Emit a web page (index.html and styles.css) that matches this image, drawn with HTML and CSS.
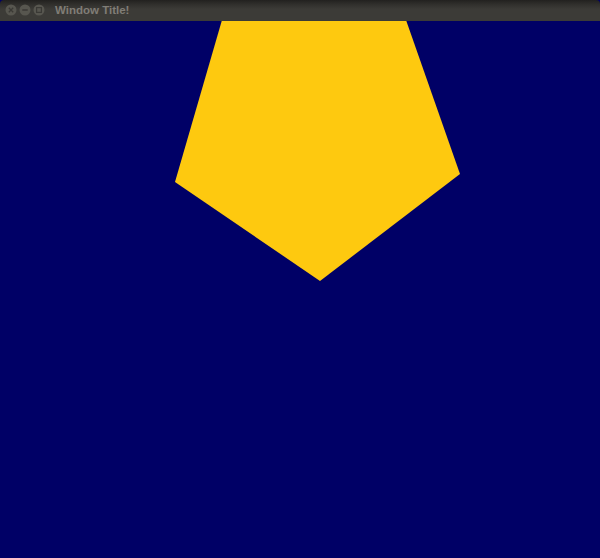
FILE: index.html
```html
<!DOCTYPE html>
<html>
<head>
<meta charset="utf-8">
<link rel="stylesheet" href="styles.css">
</head>
<body>
<div class="window">
  <div class="titlebar">
    <div class="buttons">
      <svg class="btn" width="12" height="12" viewBox="0 0 12 12"><circle cx="6" cy="6" r="5.5" fill="#57564f"/><path d="M3.8 3.8 L8.2 8.2 M8.2 3.8 L3.8 8.2" stroke="#3a3935" stroke-width="1.3"/></svg>
      <svg class="btn" width="12" height="12" viewBox="0 0 12 12"><circle cx="6" cy="6" r="5.5" fill="#57564f"/><path d="M3.3 6 L8.7 6" stroke="#3a3935" stroke-width="1.5"/></svg>
      <svg class="btn" width="12" height="12" viewBox="0 0 12 12"><circle cx="6" cy="6" r="5.5" fill="#57564f"/><rect x="3.6" y="3.6" width="4.8" height="4.8" fill="none" stroke="#3a3935" stroke-width="1.2"/></svg>
    </div>
    <span class="title">Window Title!</span>
  </div>
  <div class="canvas">
    <svg class="scene" width="600" height="537" viewBox="0 0 600 537">
      <polygon points="222,-1 406,-1 460,153 320,260 175,161" fill="#fec90f"/>
    </svg>
  </div>
</div>
</body>
</html>
```
FILE: styles.css
```css
html, body {
  margin: 0;
  padding: 0;
  background: #000066;
}
.window {
  width: 600px;
  height: 558px;
  display: flex;
  flex-direction: column;
  overflow: hidden;
}
.titlebar {
  height: 21px;
  flex: 0 0 21px;
  display: flex;
  align-items: center;
  background: linear-gradient(to bottom, #22211f 0px, #2f2e2b 4px, #3c3b37 9px, #3c3b37 100%);
  border-radius: 4px 4px 0 0;
  box-sizing: border-box;
  padding-left: 5px;
}
.buttons {
  display: flex;
  gap: 2px;
  align-items: center;
  margin-top: -1px;
}
.btn {
  display: block;
}
.title {
  margin-left: 10px;
  font-family: "Liberation Sans", Arial, sans-serif;
  font-weight: bold;
  font-size: 11.5px;
  color: #807d76;
  margin-top: -1px;
}
.canvas {
  flex: 1;
  background: #000066;
}
.scene {
  display: block;
}
```
